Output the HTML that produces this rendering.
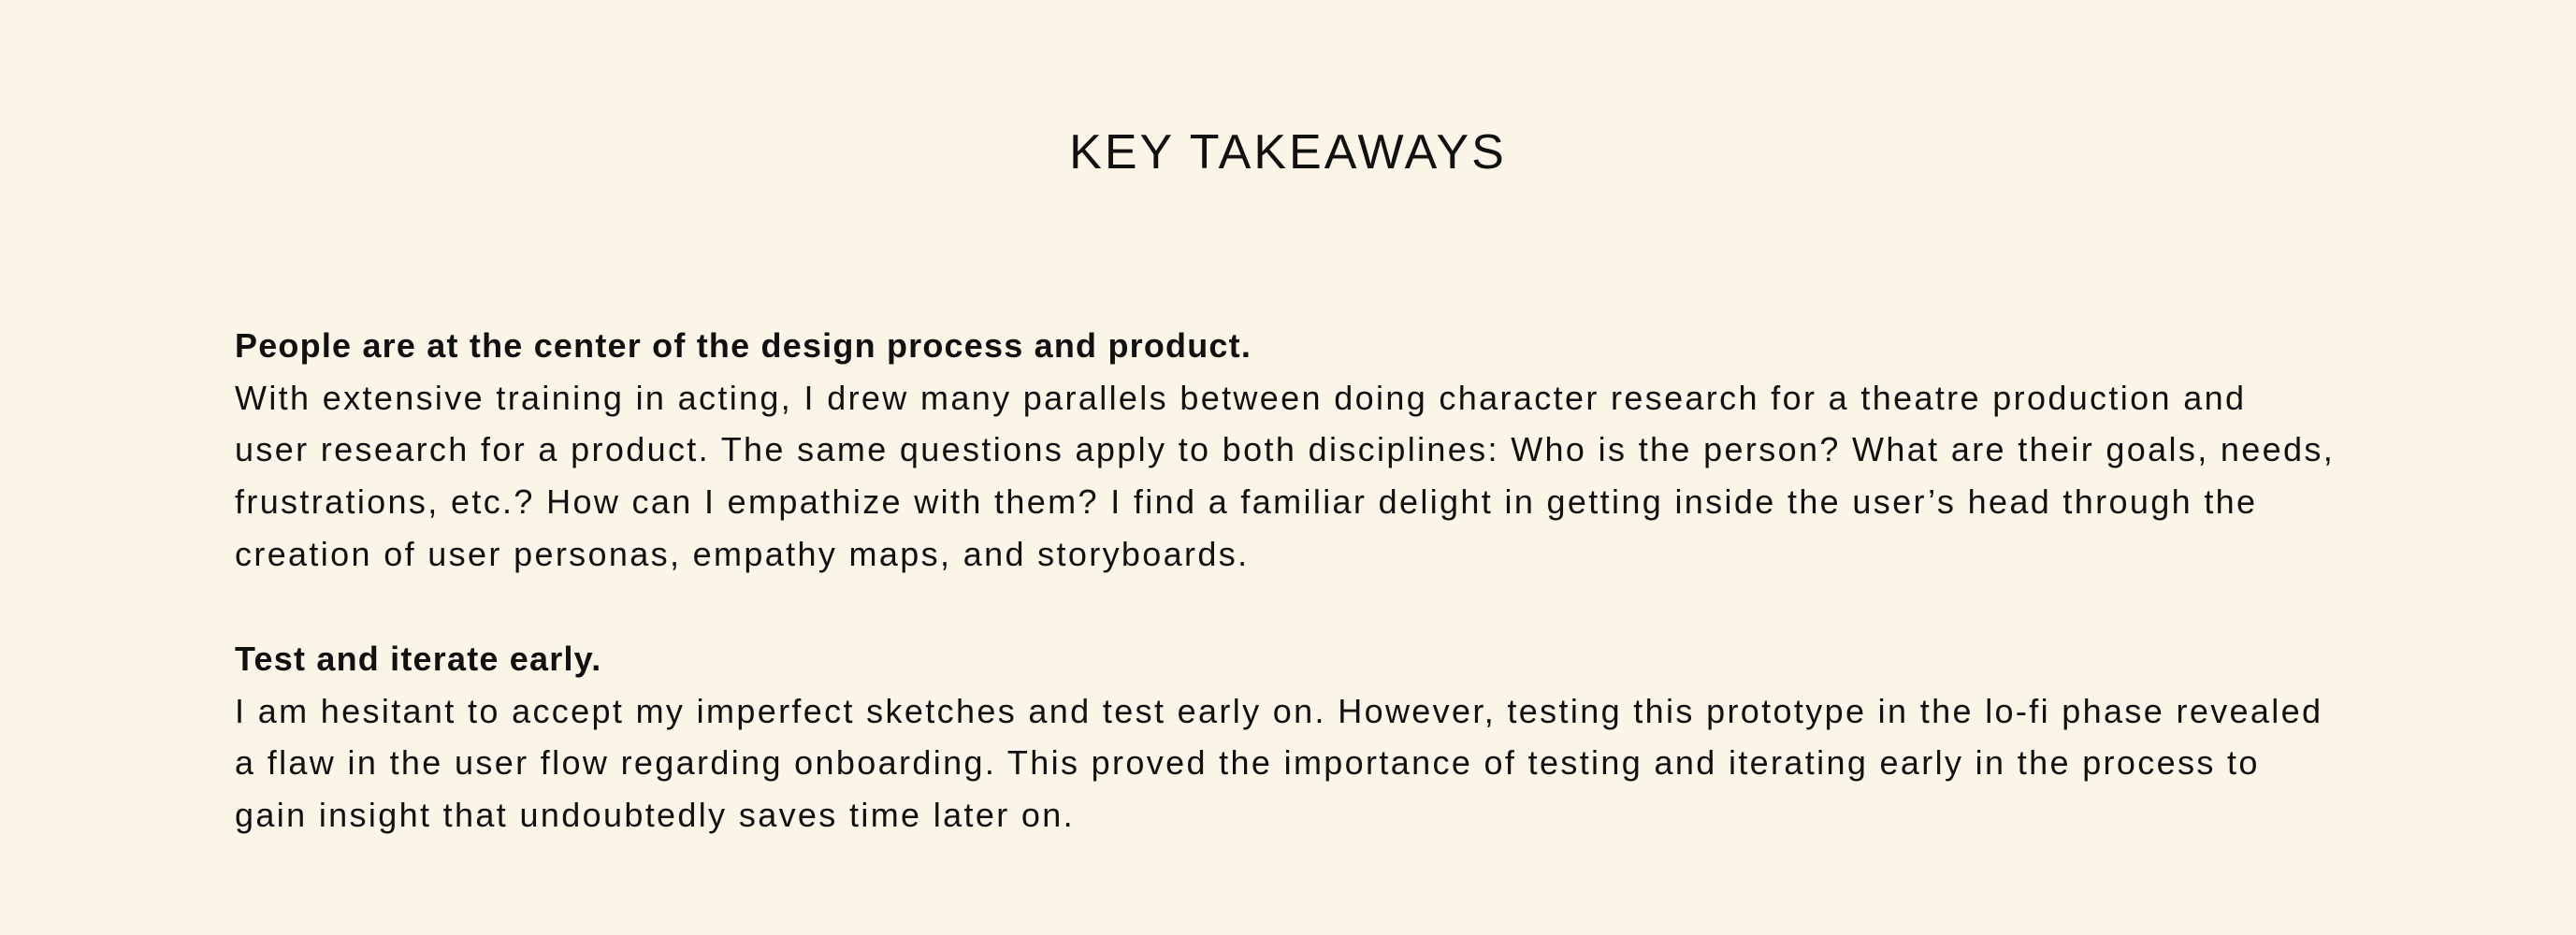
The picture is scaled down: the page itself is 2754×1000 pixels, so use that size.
<!DOCTYPE html>
<html><head><meta charset="utf-8"><style>
html,body{margin:0;padding:0}
body{width:2754px;height:1000px;background:#fbf5e8;color:#111;font-family:"Liberation Sans",sans-serif;position:relative;overflow:hidden}
h1{position:absolute;left:0;width:2754px;top:131px;margin:0;text-align:center;font-weight:400;font-size:52px;line-height:64px;letter-spacing:3px}
.b{position:absolute;left:251px;font-size:36px;line-height:55.7px;white-space:nowrap;letter-spacing:2.35px}
.b div{height:55.7px}
.s{font-weight:700;letter-spacing:1.2px}
</style></head><body>
<h1>KEY TAKEAWAYS</h1>
<div class="b" style="top:342px">
<div class="s">People are at the center of the design process and product.</div>
<div>With extensive training in acting, I drew many parallels between doing character research for a theatre production and</div>
<div>user research for a product. The same questions apply to both disciplines: Who is the person? What are their goals, needs,</div>
<div>frustrations, etc.? How can I empathize with them? I find a familiar delight in getting inside the user’s head through the</div>
<div>creation of user personas, empathy maps, and storyboards.</div>
</div>
<div class="b" style="top:677px">
<div class="s">Test and iterate early.</div>
<div>I am hesitant to accept my imperfect sketches and test early on. However, testing this prototype in the lo-fi phase revealed</div>
<div>a flaw in the user flow regarding onboarding. This proved the importance of testing and iterating early in the process to</div>
<div>gain insight that undoubtedly saves time later on.</div>
</div>
</body></html>
